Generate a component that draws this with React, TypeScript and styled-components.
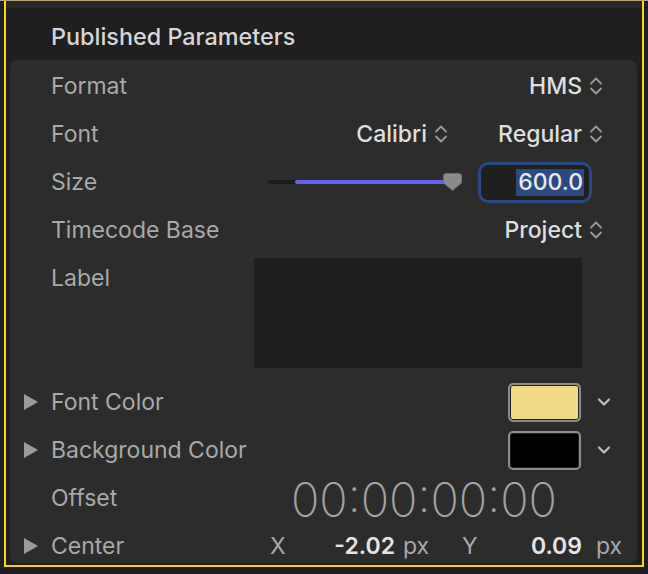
import React from "react";
import styled, { createGlobalStyle } from "styled-components";

const Global = createGlobalStyle`
  html, body { margin: 0; padding: 0; background: #1d1d22; }
  body { font-family: Inter, "Noto Sans", "Liberation Sans", sans-serif; }
  * { box-sizing: border-box; }
`;

const Page = styled.div`
  width: 648px;
  height: 574px;
  background: #1d1d22;
  border-top: 1px solid #b9a47e;
  overflow: hidden;
`;

const Frame = styled.div`
  margin-left: 4px;
  width: 640px;
  height: 566px;
  border: 2px solid #f7d60a;
  border-top: none;
  background: #1f1f1f;
  display: flex;
  flex-direction: column;
`;

const TopStrip = styled.div`
  height: 8px;
  background: #282828;
  border-bottom: 1px solid #232323;
`;

const Header = styled.div`
  height: 51px;
  display: flex;
  align-items: center;
  padding-left: 45px;
  padding-top: 4px;
  font-size: 23.4px;
  font-weight: 500;
  color: #d6d6d6;
`;

const Panel = styled.div`
  margin: 0 5px 0 4px;
  height: 503px;
  background: #2c2c2c;
  border-radius: 7px;
  padding-top: 2px;
  overflow: hidden;
`;

const Row = styled.div<{ $h?: number; $top?: boolean }>`
  height: ${(p) => p.$h ?? 48}px;
  display: flex;
  align-items: ${(p) => (p.$top ? "flex-start" : "center")};
  position: relative;
`;

const Disclosure = styled.svg`
  position: absolute;
  left: 14px;
  top: 16px;
`;

const Label = styled.div`
  padding-left: 41px;
  font-size: 23px;
  color: #a9a9a9;
  line-height: 48px;
`;

const Right = styled.div<{ $mr: number; $gap?: number }>`
  margin-left: auto;
  margin-right: ${(p) => p.$mr}px;
  display: flex;
  align-items: center;
  gap: ${(p) => p.$gap ?? 0}px;
`;

const Popup = styled.div`
  display: flex;
  align-items: center;
  gap: 7px;
  font-size: 23px;
  font-weight: 500;
  color: #dedede;
`;

const Chevrons = () => (
  <svg width="14" height="22" viewBox="0 0 14 22">
    <path d="M2 8.5 L7 3.5 L12 8.5 M2 13.5 L7 18.5 L12 13.5" fill="none" stroke="#9a9a9a" strokeWidth="1.8" strokeLinecap="round" strokeLinejoin="round" />
  </svg>
);

const Slider = styled.div`
  width: 194px;
  height: 20px;
  position: relative;
  margin-right: 16px;
`;

const TrackDark = styled.div`
  position: absolute;
  left: 0;
  top: 8px;
  width: 30px;
  height: 4px;
  background: #1b1b1b;
  border-radius: 2px;
`;

const TrackFill = styled.div`
  position: absolute;
  left: 27px;
  top: 8px;
  width: 152px;
  height: 4px;
  background: #6262ee;
  border-radius: 2px;
`;

const Thumb = styled.svg`
  position: absolute;
  left: 175px;
  top: 1px;
`;

const NumberField = styled.div`
  width: 114px;
  height: 41px;
  border: 3px solid #284a80;
  border-radius: 10px;
  background: #1f1f1f;
  display: flex;
  align-items: center;
  justify-content: flex-end;
  padding-right: 5px;
`;

const Selected = styled.span`
  background: #2a4a80;
  color: #e8e8e8;
  font-size: 23px;
  font-weight: 500;
  line-height: 27px;
  padding: 0 1px 0 2px;
`;

const TextBox = styled.div`
  margin-top: 4px;
  width: 328px;
  height: 110px;
  background: #1f1f1f;
`;

const Swatch = styled.div<{ $color: string }>`
  width: 73px;
  height: 39px;
  border: 2px solid #8c8c8c;
  border-radius: 5px;
  background: ${(p) => p.$color};
  box-shadow: inset 0 0 0 1px #222;
`;

const DownChevron = () => (
  <svg width="14" height="10" viewBox="0 0 14 10">
    <path d="M2 2.5 L7 7.5 L12 2.5" fill="none" stroke="#bdbdbd" strokeWidth="2.2" strokeLinecap="round" strokeLinejoin="round" />
  </svg>
);

const Timecode = styled.div`
  font-size: 47px;
  font-weight: 200;
  color: #a3a3a3;
  margin-top: 2px;
`;

const Axis = styled.span<{ $w: number }>`
  width: ${(p) => p.$w}px;
  font-size: 23px;
  color: #a9a9a9;
`;

const Coord = styled.span<{ $w: number }>`
  width: ${(p) => p.$w}px;
  text-align: right;
  font-size: 23px;
  font-weight: 600;
  color: #e4e4e4;
`;

const Unit = styled.span<{ $w: number; $pl: number }>`
  width: ${(p) => p.$w}px;
  padding-left: ${(p) => p.$pl}px;
  font-size: 23px;
  color: #a9a9a9;
`;

const Tri = () => (
  <Disclosure width="14" height="16" viewBox="0 0 14 16">
    <path d="M0 0 L14 8 L0 16 Z" fill="#9b9b9b" />
  </Disclosure>
);

export default function App() {
  return (
    <>
      <Global />
      <Page>
        <Frame>
          <TopStrip />
          <Header>Published Parameters</Header>
          <Panel>
            <Row>
              <Label>Format</Label>
              <Right $mr={34}>
                <Popup>HMS<Chevrons /></Popup>
              </Right>
            </Row>
            <Row>
              <Label>Font</Label>
              <Right $mr={34} $gap={50}>
                <Popup>Calibri<Chevrons /></Popup>
                <Popup>Regular<Chevrons /></Popup>
              </Right>
            </Row>
            <Row>
              <Label>Size</Label>
              <Right $mr={45}>
                <Slider>
                  <TrackDark />
                  <TrackFill />
                  <Thumb width="19" height="18" viewBox="0 0 19 18">
                    <path d="M3 0.5 H16 Q18.5 0.5 18.5 3 V10 L9.5 17.5 L0.5 10 V3 Q0.5 0.5 3 0.5 Z" fill="#8a8a8a" stroke="#6e6e6e" strokeWidth="1" />
                  </Thumb>
                </Slider>
                <NumberField>
                  <Selected>600.0</Selected>
                </NumberField>
              </Right>
            </Row>
            <Row>
              <Label>Timecode Base</Label>
              <Right $mr={34}>
                <Popup>Project<Chevrons /></Popup>
              </Right>
            </Row>
            <Row $h={124} $top>
              <Label>Label</Label>
              <Right $mr={55}>
                <TextBox />
              </Right>
            </Row>
            <Row>
              <Tri />
              <Label>Font Color</Label>
              <Right $mr={26} $gap={16}>
                <Swatch $color="#f2da86" />
                <DownChevron />
              </Right>
            </Row>
            <Row>
              <Tri />
              <Label>Background Color</Label>
              <Right $mr={26} $gap={16}>
                <Swatch $color="#000000" />
                <DownChevron />
              </Right>
            </Row>
            <Row>
              <Label>Offset</Label>
              <Right $mr={80}>
                <Timecode>00:00:00:00</Timecode>
              </Right>
            </Row>
            <Row>
              <Tri />
              <Label>Center</Label>
              <Right $mr={17}>
                <Axis $w={60}>X</Axis>
                <Coord $w={65}>-2.02</Coord>
                <Unit $w={67} $pl={8}>px</Unit>
                <Axis $w={62}>Y</Axis>
                <Coord $w={58}>0.09</Coord>
                <Unit $w={38} $pl={14}>px</Unit>
              </Right>
            </Row>
          </Panel>
        </Frame>
      </Page>
    </>
  );
}
